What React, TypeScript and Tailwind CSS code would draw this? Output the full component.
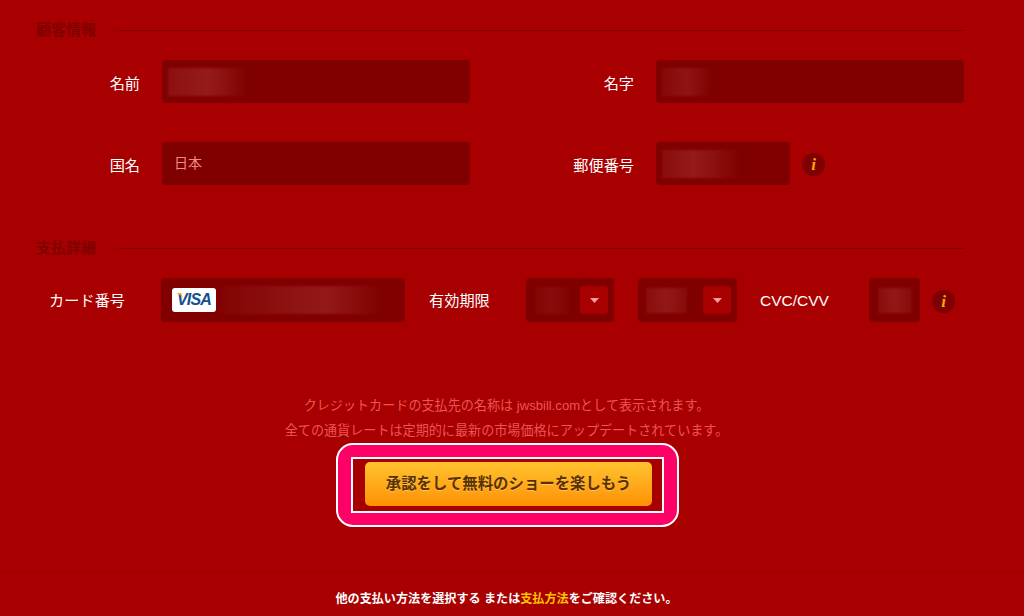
import React from "react";

function Blur({ className }: { className: string }) {
  return <div className={"shrink-0 blur-[1px] " + className} />;
}

function Info() {
  return (
    <div className="flex h-[23px] w-[23px] shrink-0 items-center justify-center rounded-full bg-[#7f0000] font-['Liberation_Serif',serif] text-[17px] font-bold italic leading-none text-[#f2a900]">
      i
    </div>
  );
}

function Heading({ children }: { children: string }) {
  return (
    <div className="flex h-5 items-center">
      <div className="w-[83px] shrink-0 text-[15px] font-bold leading-5 text-[#800000]">{children}</div>
      <div className="h-px flex-1 bg-[#7f0000]" />
    </div>
  );
}

function Arrow({ className }: { className: string }) {
  return (
    <div className={"flex h-7 w-7 shrink-0 items-center justify-center rounded bg-[#a80000] " + className}>
      <svg width="9" height="5" viewBox="0 0 9 5">
        <path d="M0 0h9L4.500 5z" fill="#ff9a9a" />
      </svg>
    </div>
  );
}

export default function App() {
  return (
    <div className="flex h-[616px] w-[1024px] flex-col overflow-hidden bg-[#a80000] font-['Liberation_Sans','Noto_Sans_CJK_JP',sans-serif] antialiased">
      <div className="px-[60px] pl-9 pt-5">
        <Heading>顧客情報</Heading>

        <div className="mt-5 flex h-[43px] items-center">
          <div className="w-[104px] pt-[6px] text-right text-[15.2px] text-white">名前</div>
          <div className="ml-[22px] flex h-full w-[308px] items-center rounded bg-[#800000] pl-1.5">
            <Blur className="h-7 w-20 bg-linear-to-r from-[#8c1010] via-[#951a1a] via-50% to-[#800000]" />
          </div>
          <div className="w-[164px] pt-[6px] text-right text-[15.2px] text-white">名字</div>
          <div className="ml-[22px] flex h-full w-[308px] items-center rounded bg-[#800000] pl-1.5">
            <Blur className="h-7 w-[50px] bg-linear-to-r from-[#860808] via-[#901414] to-[#800000]" />
          </div>
        </div>

        <div className="mt-[39px] flex h-[43px] items-center">
          <div className="w-[104px] pt-[6px] text-right text-[15.2px] text-white">国名</div>
          <div className="ml-[22px] flex h-full w-[308px] items-center rounded bg-[#800000] pl-3 text-[14px] text-[#f08a8a]">
            日本
          </div>
          <div className="w-[164px] pt-[6px] text-right text-[15.2px] text-white">郵便番号</div>
          <div className="ml-[22px] flex h-full w-[134px] items-center rounded bg-[#800000] pl-1.5">
            <Blur className="h-7 w-[78px] bg-linear-to-r from-[#8a0c0c] via-[#951a1a] via-40% to-[#800000]" />
          </div>
          <div className="ml-3 mt-px">
            <Info />
          </div>
        </div>

        <div className="mt-[53px]">
          <Heading>支払詳細</Heading>
        </div>

        <div className="mt-5 flex h-11 items-center">
          <div className="w-[89px] whitespace-nowrap pt-0.5 text-right text-[15.2px] text-white">カード番号</div>
          <div className="ml-9 flex h-full w-[244px] items-center rounded bg-[#800000] pl-[11px]">
            <div className="relative flex h-6 w-11 shrink-0 items-center justify-center rounded-[3px] bg-white text-[16px] font-bold italic leading-none tracking-[-0.8px] text-[#14508f]">
              VISA
              <svg className="absolute left-1 top-[5px]" width="7" height="5" viewBox="0 0 7 5">
                <path d="M0 0h5l2 5C5 2.500 3 1 0 0z" fill="#f2a51f" />
              </svg>
            </div>
            <Blur className="ml-1.5 h-7 w-[160px] bg-linear-to-r from-[#840404] via-[#931818] via-65% to-[#800000]" />
          </div>
          <div className="ml-6 w-[62px] whitespace-nowrap pt-0.5 text-[15.2px] text-white">有効期限</div>
          <div className="ml-[35px] flex h-full w-[88px] items-center rounded bg-[#800000] pl-[9px]">
            <Blur className="h-[27px] w-[34px] bg-linear-to-r from-[#840404] via-[#8a0c0c] to-[#820202]" />
            <Arrow className="ml-[11px]" />
          </div>
          <div className="ml-6 flex h-full w-[99px] items-center rounded bg-[#800000] pl-2">
            <Blur className="h-[25px] w-[41px] bg-linear-to-r from-[#8a0c0c] via-[#931818] to-[#880a0a]" />
            <Arrow className="ml-4" />
          </div>
          <div className="ml-[23px] w-[70px] pt-0.5 text-[15.5px] text-white">CVC/CVV</div>
          <div className="ml-[39px] flex h-full w-[51px] items-center rounded bg-[#800000] pl-[9px]">
            <Blur className="h-[25px] w-[34px] bg-linear-to-r from-[#8a0c0c] via-[#931818] to-[#880a0a]" />
          </div>
          <div className="ml-3 mt-0.5">
            <Info />
          </div>
        </div>
      </div>

      <div className="mt-[71px] flex flex-col items-center pr-[11px] text-[13.1px] leading-[25px] text-[#ec5555]">
        <p>クレジットカードの支払先の名称は jwsbill.comとして表示されます。</p>
        <p>全ての通貨レートは定期的に最新の市場価格にアップデートされています。</p>
      </div>

      <div className="flex justify-center pr-[13px]">
        <div className="ml-1 h-[84px] w-[343px] rounded-[17px] border-2 border-white bg-[#ff0066] px-[13px] py-3">
          <div className="flex h-14 items-center justify-center border-2 border-white bg-[#a80000]">
            <div className="mb-[2px] ml-[2px] flex h-11 w-[287px] items-center justify-center rounded-[5px] bg-linear-to-b from-[#ffc42d] to-[#ff9000] text-[15.4px] font-bold text-[#5a3000] [text-shadow:0_1px_0_rgba(255,220,120,0.6)]">
              承認をして無料のショーを楽しもう
            </div>
          </div>
        </div>
      </div>

      <div className="mt-[45px] flex flex-1 items-center justify-center border-t border-[#960000] pr-[11px] pt-2.5 text-[12.1px] font-bold text-white">
        <p>
          他の支払い方法を選択する または<span className="text-[#ffc000]">支払方法</span>をご確認ください。
        </p>
      </div>
    </div>
  );
}
